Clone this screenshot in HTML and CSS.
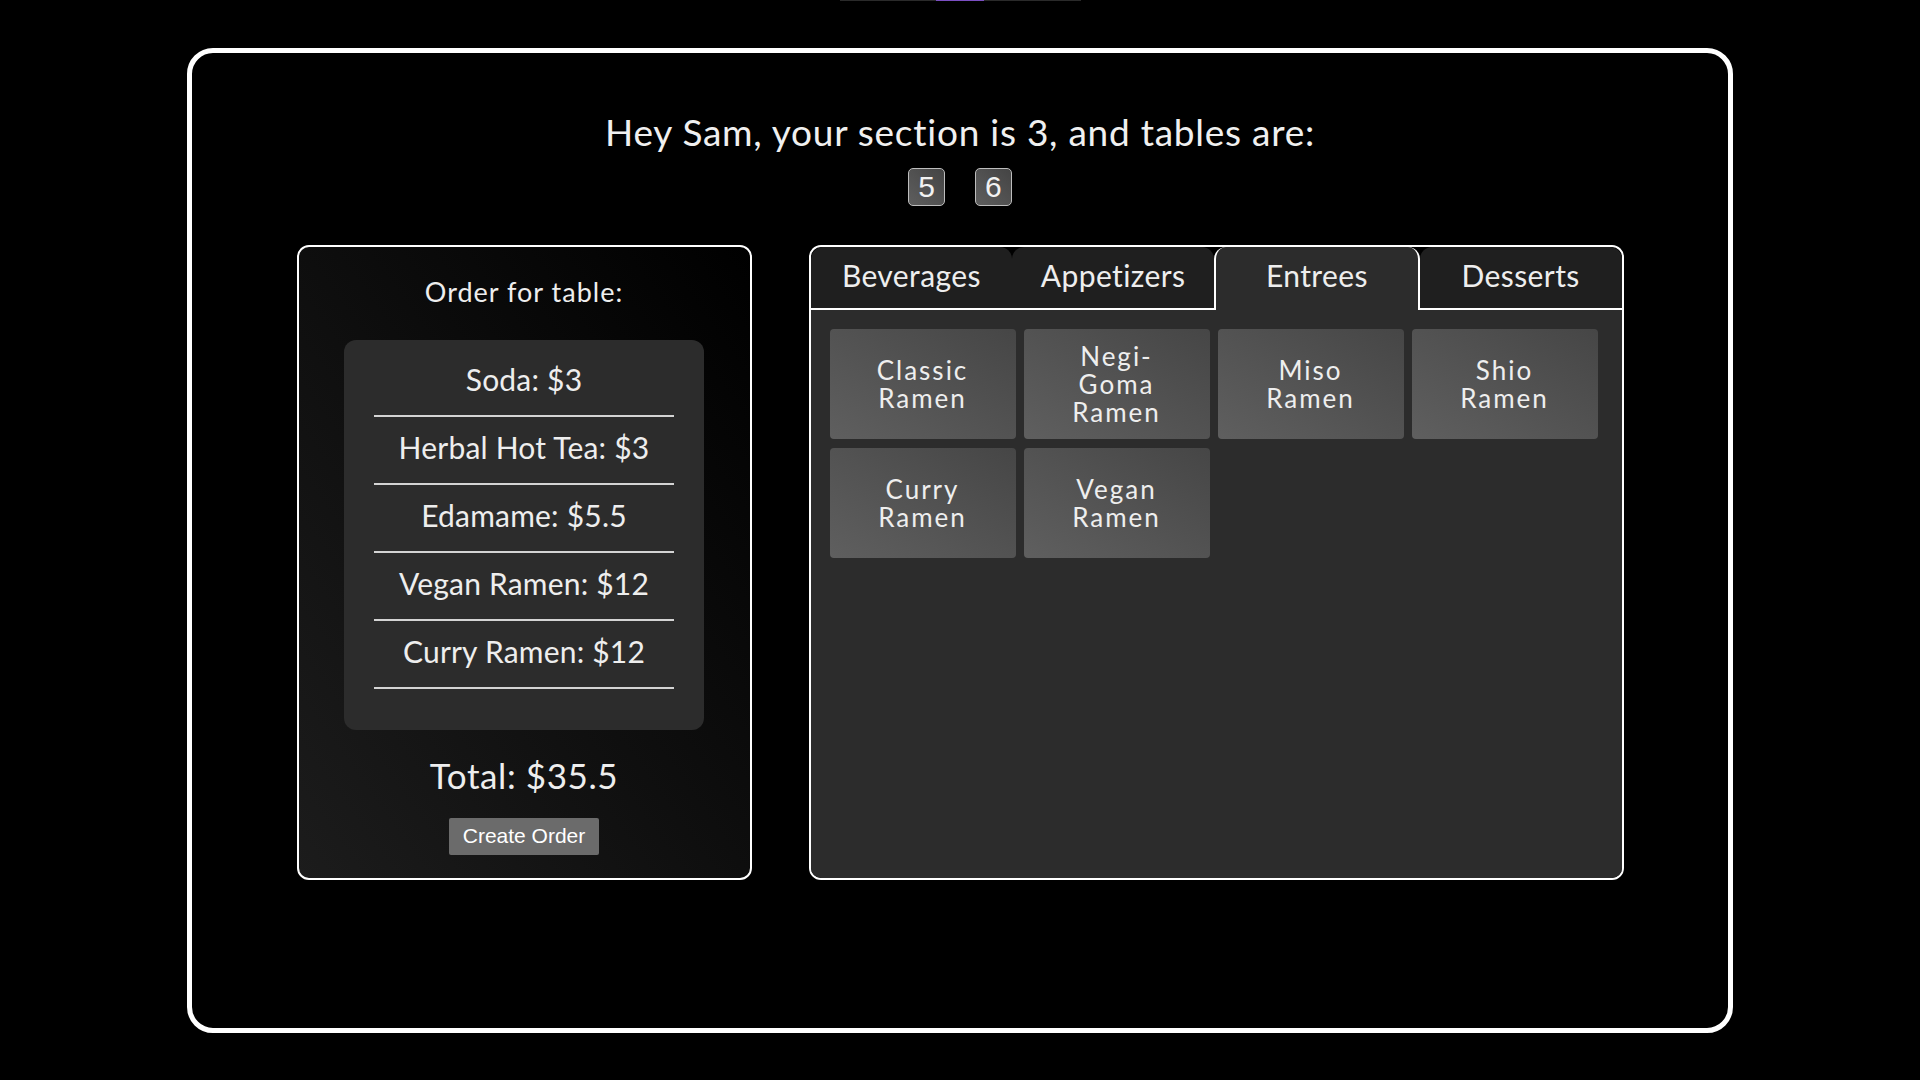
FILE: index.html
```html
<!DOCTYPE html>
<html lang="en">
<head>
<meta charset="utf-8">
<title>Server Orders</title>
<link rel="stylesheet" href="styles.css">
</head>
<body>
<div class="topbar"><div class="topbar-thumb"></div></div>
<main class="frame">
  <h1 class="greeting">Hey Sam, your section is 3, and tables are:</h1>
  <div class="tables">
    <span class="table-badge">5</span>
    <span class="table-badge">6</span>
  </div>
  <section class="panels">
    <div class="order-panel">
      <h2 class="order-title">Order for table:</h2>
      <ul class="order-list">
        <li class="order-item">Soda: $3</li>
        <li class="order-item">Herbal Hot Tea: $3</li>
        <li class="order-item">Edamame: $5.5</li>
        <li class="order-item">Vegan Ramen: $12</li>
        <li class="order-item">Curry Ramen: $12</li>
      </ul>
      <div class="order-total">Total: $35.5</div>
      <button class="create-btn">Create Order</button>
    </div>
    <div class="menu-panel">
      <nav class="tabs">
        <div class="tab">Beverages</div>
        <div class="tab">Appetizers</div>
        <div class="tab tab-active">Entrees</div>
        <div class="tab">Desserts</div>
      </nav>
      <div class="menu-grid">
        <div class="menu-card">Classic Ramen</div>
        <div class="menu-card">Negi-Goma Ramen</div>
        <div class="menu-card">Miso Ramen</div>
        <div class="menu-card">Shio Ramen</div>
        <div class="menu-card">Curry Ramen</div>
        <div class="menu-card">Vegan Ramen</div>
      </div>
    </div>
  </section>
</main>
</body>
</html>
```
FILE: styles.css
```css
* { box-sizing: border-box; }

html, body {
  margin: 0;
  padding: 0;
  background: #000;
}

body {
  font-family: "Lato", "Noto Sans", sans-serif;
  color: #eeeeee;
}

.topbar {
  width: 241px;
  height: 1px;
  margin: 0 auto;
  background: #2a2a2a;
  display: flex;
  justify-content: center;
}

.topbar-thumb {
  width: 48px;
  height: 1px;
  background: #7b4fc2;
}

.frame {
  box-sizing: content-box;
  width: 80%;
  height: 975px;
  margin: 47px auto 0;
  border: 5px solid #fff;
  border-radius: 26px;
  display: flex;
  flex-direction: column;
  align-items: center;
}

.greeting {
  margin: 57px 0 0;
  font-size: 37px;
  line-height: 44px;
  font-weight: 400;
  letter-spacing: 0.75px;
  color: #f0f0f0;
}

.tables {
  display: flex;
  gap: 30px;
  margin-top: 14px;
}

.table-badge {
  font-family: "Liberation Sans", Arial, sans-serif;
  font-size: 30px;
  line-height: 34px;
  padding: 1px 9px;
  border: 1px solid #bdbdbd;
  border-radius: 5px;
  background: linear-gradient(to top right, #5e5e5e, #444444);
  color: #f2f2f2;
}

.panels {
  display: flex;
  justify-content: center;
  align-items: stretch;
  gap: 57px;
  margin-top: 39px;
}

.order-panel {
  width: 455px;
  border: 2px solid #fff;
  border-radius: 12px;
  background: linear-gradient(to top right, #1c1c1c, #000000);
  padding: 29px 0 23px;
  display: flex;
  flex-direction: column;
  align-items: center;
}

.order-title {
  margin: 0;
  font-size: 27px;
  line-height: 31px;
  font-weight: 400;
  letter-spacing: 1px;
}

.order-list {
  list-style: none;
  margin: 33px 0 0;
  width: 360px;
  padding: 9px 30px 41px;
  background: #2c2c2c;
  border-radius: 12px;
}

.order-item {
  font-size: 30px;
  line-height: 36px;
  letter-spacing: 0.2px;
  padding: 12px 0 18px;
  text-align: center;
  border-bottom: 2px solid #d4d4d4;
}

.order-total {
  margin-top: 24px;
  font-size: 35px;
  line-height: 42px;
  letter-spacing: 0.6px;
}

.create-btn {
  margin-top: 22px;
  font-family: "Liberation Sans", Arial, sans-serif;
  font-size: 21px;
  line-height: 24px;
  padding: 6px 14px 7px;
  border: none;
  border-radius: 2px;
  background: #6b6b6b;
  color: #fff;
}

.menu-panel {
  width: 815px;
  border: 2px solid #fff;
  border-radius: 12px;
  background: #000;
  overflow: hidden;
  display: flex;
  flex-direction: column;
}

.tabs {
  display: flex;
}

.tab {
  flex: 1;
  text-align: center;
  font-size: 30px;
  line-height: 35px;
  letter-spacing: 0.4px;
  padding: 11px 0 15px;
  background: #1f1f1f;
  border-bottom: 2px solid #fff;
  border-radius: 12px 12px 0 0;
}

.tab-active {
  background: #2c2c2c;
  border: 2px solid #fff;
  border-top: 0;
  border-bottom: 0;
  padding-bottom: 17px;
}

.menu-grid {
  flex: 1;
  background: #2c2c2c;
  padding: 19px 19px;
  display: grid;
  grid-template-columns: repeat(4, 186px);
  grid-auto-rows: 110px;
  gap: 9px 8px;
  align-content: start;
}

.menu-card {
  display: flex;
  align-items: center;
  justify-content: center;
  text-align: center;
  padding: 0 30px;
  font-size: 26px;
  line-height: 28px;
  letter-spacing: 2px;
  color: #eeeeee;
  border-radius: 4px;
  background: linear-gradient(to top right, #5f5f5f, #464646);
}
```
